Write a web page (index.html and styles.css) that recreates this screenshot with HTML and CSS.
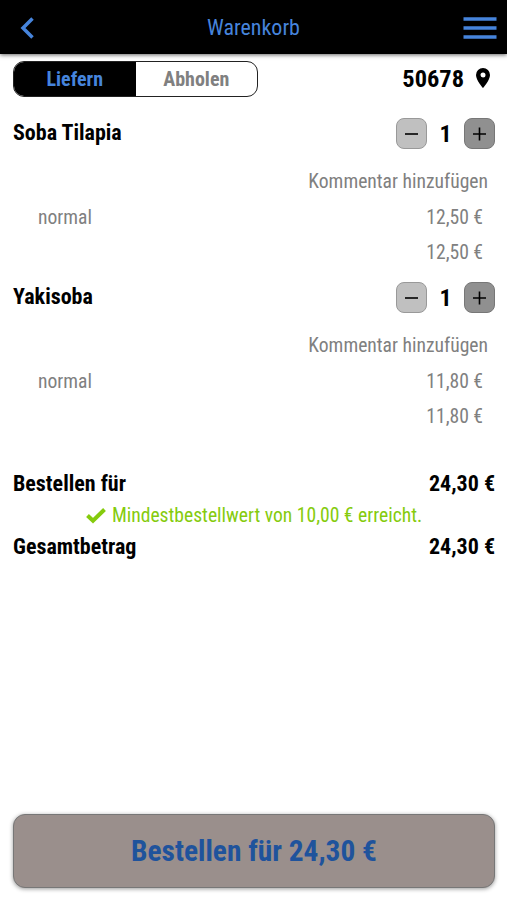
FILE: index.html
```html
<!DOCTYPE html>
<html lang="de">
<head>
  <meta charset="UTF-8" />
  <meta name="viewport" content="width=device-width, initial-scale=1.0" />
  <title>Warenkorb</title>
  <link rel="stylesheet" href="styles.css">
</head>
<body>
  <header>
    <button class="icon-btn" aria-label="Zurück">
      <svg width="14" height="22" viewBox="0 0 14 22"><path d="M12.500 1.500 3 11 12.500 20.500" /></svg>
    </button>
    <h1>Warenkorb</h1>
    <button class="icon-btn menu" aria-label="Menü">
      <svg width="34" height="22" viewBox="0 0 34 22"><path d="M.5 2h33M.5 11h33M.5 20h33" /></svg>
    </button>
  </header>

  <main>
    <div class="delivery">
      <div class="toggle">
        <button class="active">Liefern</button>
        <button>Abholen</button>
      </div>
      <div class="zip">
        <span>50678</span>
        <svg width="14" height="20" viewBox="0 0 14 20"><path fill-rule="evenodd" d="M7 0a7 7 0 0 0-7 7c0 5.200 7 13 7 13s7-7.800 7-13a7 7 0 0 0-7-7zm0 4.500a2.500 2.500 0 1 1 0 5 2.500 2.500 0 0 1 0-5z" /></svg>
      </div>
    </div>

    <section class="item">
      <div class="item-head">
        <h2>Soba Tilapia</h2>
        <div class="stepper">
          <button class="minus" aria-label="Weniger"><svg width="14" height="14" viewBox="0 0 14 14"><path d="M0 7h13" /></svg></button>
          <span>1</span>
          <button class="plus" aria-label="Mehr"><svg width="14" height="14" viewBox="0 0 14 14"><path d="M0 7h13M6.500 .5v13" /></svg></button>
        </div>
      </div>
      <p class="comment">Kommentar hinzufügen</p>
      <p class="line"><span>normal</span><span>12,50 €</span></p>
      <p class="line sum"><span>12,50 €</span></p>
    </section>

    <section class="item">
      <div class="item-head">
        <h2>Yakisoba</h2>
        <div class="stepper">
          <button class="minus" aria-label="Weniger"><svg width="14" height="14" viewBox="0 0 14 14"><path d="M0 7h13" /></svg></button>
          <span>1</span>
          <button class="plus" aria-label="Mehr"><svg width="14" height="14" viewBox="0 0 14 14"><path d="M0 7h13M6.500 .5v13" /></svg></button>
        </div>
      </div>
      <p class="comment">Kommentar hinzufügen</p>
      <p class="line"><span>normal</span><span>11,80 €</span></p>
      <p class="line sum"><span>11,80 €</span></p>
    </section>

    <section class="totals">
      <p class="total"><span>Bestellen für</span><span>24,30 €</span></p>
      <p class="minimum">
        <svg width="20" height="16" viewBox="0 0 20 16"><path d="M1.500 7.500 7 12.800 18.500 1.500" /></svg>
        <span>Mindestbestellwert von 10,00 € erreicht.</span>
      </p>
      <p class="total"><span>Gesamtbetrag</span><span>24,30 €</span></p>
    </section>

    <button class="order-btn">Bestellen für 24,30 €</button>
  </main>
</body>
</html>
```
FILE: styles.css
```css
:root {
  --blue: #4684dc;
  --grey: #808080;
  --green: #85cb0d;
}

* {
  box-sizing: border-box;
  margin: 0;
  padding: 0;
}

body {
  font-family: 'Roboto Condensed', Roboto, sans-serif;
  font-stretch: 75%;
  font-size: 19.6px;
  color: #000;
  background: #fff;
  height: 900px;
  display: flex;
  flex-direction: column;
}

button {
  font: inherit;
  border: none;
  background: none;
  cursor: pointer;
}

svg {
  display: block;
}

header {
  height: 54px;
  padding: 2px 10px 0 20px;
  background: #000;
  color: var(--blue);
  display: grid;
  grid-template-columns: 34px 1fr 44px;
  align-items: center;
  box-shadow: 0 1px 4px rgba(0, 0, 0, 0.6);
}

header h1 {
  padding-bottom: 1px;
  font-size: 22px;
  font-weight: 400;
  text-align: center;
}

.icon-btn {
  color: inherit;
}

.icon-btn svg {
  fill: none;
  stroke: currentColor;
  stroke-width: 3.5;
}

.menu {
  justify-self: end;
}

main {
  flex: 1;
  padding: 7px 12px 12px 13px;
  display: flex;
  flex-direction: column;
}

.delivery {
  display: flex;
  justify-content: space-between;
  align-items: center;
}

.toggle {
  width: 245px;
  height: 36px;
  border: 1px solid #222;
  border-radius: 11px;
  overflow: hidden;
  display: flex;
}

.toggle button {
  flex: 1;
  font-size: 20px;
  font-weight: 700;
  color: var(--grey);
}

.toggle .active {
  background: #000;
  color: var(--blue);
}

.zip {
  display: flex;
  align-items: center;
  gap: 12px;
  padding: 0 5px 2px 0;
  font-size: 24.4px;
  font-weight: 700;
}

.item {
  height: 164px;
  padding-top: 21px;
}

.item-head {
  height: 31px;
  display: flex;
  justify-content: space-between;
}

.item-head h2 {
  font-size: 22px;
  line-height: 30px;
}

.stepper {
  display: flex;
  align-items: center;
}

.stepper span {
  width: 37px;
  text-align: center;
  font-size: 24px;
  font-weight: 700;
}

.stepper button {
  width: 31px;
  height: 31px;
  border: 1px solid #999;
  border-radius: 8px;
  display: flex;
  align-items: center;
  justify-content: center;
}

.stepper .minus {
  background: #c0c0c0;
}

.stepper .plus {
  background: #909090;
  border-color: #777;
}

.stepper path {
  stroke: #000;
  stroke-width: 1.6;
}

.comment {
  margin-top: 15px;
  padding-right: 7px;
  line-height: 36px;
  text-align: right;
  color: var(--grey);
}

.line {
  padding: 0 12px 0 25px;
  line-height: 36px;
  display: flex;
  justify-content: space-between;
  color: var(--grey);
}

.line.sum {
  justify-content: flex-end;
  line-height: 34px;
}

.totals {
  margin-top: 43px;
}

.total {
  display: flex;
  justify-content: space-between;
  font-size: 22px;
  font-weight: 700;
  line-height: 32px;
}

.minimum {
  display: flex;
  justify-content: center;
  align-items: center;
  gap: 6px;
  line-height: 31px;
  color: var(--green);
}

.minimum svg {
  fill: none;
  stroke: currentColor;
  stroke-width: 4;
}

.order-btn {
  margin-top: auto;
  height: 74px;
  border: 1px solid #777;
  border-radius: 12px;
  background: #9a8f8c;
  color: #1f539c;
  font-size: 29.4px;
  font-weight: 700;
  box-shadow: 0 1px 4px rgba(0, 0, 0, 0.4);
}
```
